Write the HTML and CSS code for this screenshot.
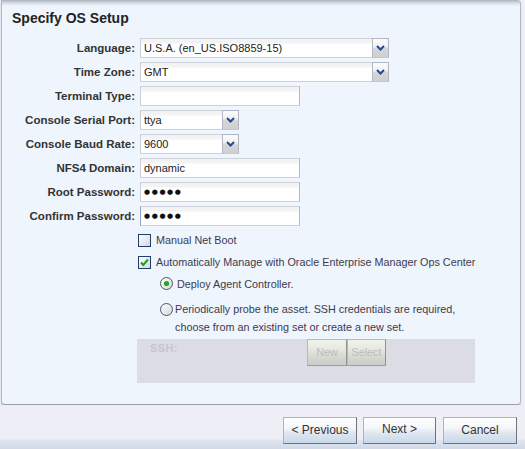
FILE: index.html
```html
<!DOCTYPE html>
<html>
<head>
<meta charset="utf-8">
<link rel="stylesheet" href="styles.css">
</head>
<body>
<div class="page">
  <div class="panel">
    <div class="title">Specify OS Setup</div>
    <div class="form">
      <label class="lbl">Language:</label>
      <div class="field sel w-long"><span class="val">U.S.A. (en_US.ISO8859-15)</span><span class="dd"><svg width="9" height="6" viewBox="0 0 9 6"><polyline points="1,1 4.5,4.5 8,1" fill="none" stroke="#27498a" stroke-width="2"/></svg></span></div>
      <label class="lbl">Time Zone:</label>
      <div class="field sel w-long"><span class="val">GMT</span><span class="dd"><svg width="9" height="6" viewBox="0 0 9 6"><polyline points="1,1 4.5,4.5 8,1" fill="none" stroke="#27498a" stroke-width="2"/></svg></span></div>
      <label class="lbl">Terminal Type:</label>
      <div class="field w-mid"><span class="val"></span></div>
      <label class="lbl">Console Serial Port:</label>
      <div class="field sel w-short"><span class="val">ttya</span><span class="dd"><svg width="9" height="6" viewBox="0 0 9 6"><polyline points="1,1 4.5,4.5 8,1" fill="none" stroke="#27498a" stroke-width="2"/></svg></span></div>
      <label class="lbl">Console Baud Rate:</label>
      <div class="field sel w-short"><span class="val">9600</span><span class="dd"><svg width="9" height="6" viewBox="0 0 9 6"><polyline points="1,1 4.5,4.5 8,1" fill="none" stroke="#27498a" stroke-width="2"/></svg></span></div>
      <label class="lbl">NFS4 Domain:</label>
      <div class="field w-mid"><span class="val">dynamic</span></div>
      <label class="lbl">Root Password:</label>
      <div class="field w-mid"><span class="val dots">●●●●●</span></div>
      <label class="lbl">Confirm Password:</label>
      <div class="field w-mid focus"><span class="val dots">●●●●●</span></div>
    </div>
    <div class="opts">
      <div class="chk-row">
        <svg class="cb" width="13" height="13" viewBox="0 0 13 13"><defs><linearGradient id="g1" x1="0" y1="0" x2="1" y2="1"><stop offset="0" stop-color="#ffffff"/><stop offset="1" stop-color="#d4d6da"/></linearGradient></defs><rect x="0.5" y="0.5" width="12" height="12" fill="url(#g1)" stroke="#1d3d6c"/></svg>
        <span>Manual Net Boot</span>
      </div>
      <div class="chk-row">
        <svg class="cb" width="13" height="13" viewBox="0 0 13 13"><rect x="0.5" y="0.5" width="12" height="12" fill="url(#g1)" stroke="#1d3d6c"/><polyline points="3,6.5 5.3,9 10,3.5" fill="none" stroke="#1f9e22" stroke-width="2"/></svg>
        <span>Automatically Manage with Oracle Enterprise Manager Ops Center</span>
      </div>
      <div class="radio-row r1">
        <svg class="rb" width="13" height="13" viewBox="0 0 13 13"><circle cx="6.5" cy="6.5" r="6" fill="url(#g1)" stroke="#4b5868"/><circle cx="6.5" cy="6.5" r="2.6" fill="#24a52a"/></svg>
        <span>Deploy Agent Controller.</span>
      </div>
      <div class="radio-row r2">
        <svg class="rb" width="13" height="13" viewBox="0 0 13 13"><circle cx="6.5" cy="6.5" r="6" fill="url(#g1)" stroke="#4b5868"/></svg>
        <span>Periodically probe the asset. SSH credentials are required,<br>choose from an existing set or create a new set.</span>
      </div>
      <div class="ssh">
        <span class="ssh-lbl">SSH:</span>
        <span class="sbtn new">New</span><span class="sbtn sel2">Select</span>
      </div>
    </div>
  </div>
  <div class="footer">
    <span class="btn b-prev">&lt; Previous</span>
    <span class="btn b-next">Next &gt;</span>
    <span class="btn b-cancel">Cancel</span>
  </div>
</div>
</body>
</html>
```
FILE: styles.css
```css
html, body {
  margin: 0;
  padding: 0;
}
body {
  background: #eeeef6;
  font-family: "Liberation Sans", Arial, sans-serif;
  font-size: 11px;
  color: #333;
}
.page {
  width: 525px;
  height: 449px;
  overflow: hidden;
}
.panel {
  box-sizing: border-box;
  height: 405px;
  margin: 0 4px 0 1px;
  border: 1px solid #b2b6c2;
  border-top: none;
  border-bottom-color: #9c9ca6;
  border-radius: 0 4px 4px 4px;
  background: linear-gradient(#a9b1bd 0, #d6dde6 3px, #eef5fd 6px);
  box-shadow: 0 2px 1px rgba(120, 120, 130, 0.35);
}
.title {
  height: 38px;
  line-height: 36px;
  padding-left: 10px;
  font-size: 14px;
  font-weight: bold;
  color: #222;
}
.form {
  display: grid;
  grid-template-columns: 133px auto;
  column-gap: 5px;
  row-gap: 4px;
  grid-auto-rows: 20px;
  justify-items: start;
}
.lbl {
  justify-self: end;
  line-height: 20px;
  font-size: 11.5px;
  font-weight: bold;
  color: #333;
}
.field {
  box-sizing: border-box;
  height: 20px;
  display: flex;
  border: 1px solid #cdd0d8;
  border-right-color: #b3b9c9;
  background: linear-gradient(#f3f3f3 0, #f3f3f3 4px, #ffffff 5px);
}
.field.focus {
  border-left-color: #8fa4c8;
}
.w-long { width: 249px; }
.w-mid { width: 160px; }
.w-short { width: 99px; }
.val {
  flex: 1;
  padding-left: 3px;
  line-height: 18px;
  color: #222;
  white-space: nowrap;
  overflow: hidden;
}
.dots {
  font-family: "DejaVu Sans", sans-serif;
  font-size: 7px;
  letter-spacing: 1.6px;
  color: #111;
  line-height: 18px;
}
.dd {
  box-sizing: border-box;
  width: 17px;
  margin: -1px -1px -1px 0;
  height: 20px;
  border: 1px solid #b2b7c6;
  border-bottom-color: #c4c8d2;
  background: linear-gradient(#fbfbfb 0, #f2f2f2 40%, #d4d4d6 55%, #d0d0d2 100%);
  display: flex;
  justify-content: center;
  padding-top: 6px;
}
.opts {
  margin-left: 136px;
  margin-top: 3px;
  color: #3d3a4e;
  font-size: 10.8px;
}
.chk-row {
  height: 22px;
  display: flex;
  align-items: center;
  gap: 5px;
}
.cb, .rb {
  flex: none;
}
.radio-row {
  display: flex;
  gap: 4px;
  margin-left: 22px;
}
.radio-row.r1 {
  height: 21px;
  align-items: center;
}
.radio-row.r2 {
  margin-top: 6px;
  line-height: 18px;
  align-items: flex-start;
}
.radio-row.r2 .rb {
  margin-top: 3px;
}
.radio-row.r2 span {
  margin-left: -2px;
}
.ssh {
  margin-top: 3px;
  width: 338px;
  height: 44px;
  box-sizing: border-box;
  margin-left: -1px;
  background: #dcdce4;
  display: flex;
  align-items: flex-start;
  padding-left: 13px;
}
.ssh-lbl {
  width: 157px;
  line-height: 18px;
  font-weight: bold;
  color: #c4c6cf;
  letter-spacing: 0.5px;
}
.sbtn {
  box-sizing: border-box;
  height: 27px;
  line-height: 25px;
  text-align: center;
  color: #b9bdc2;
  border: 1px solid #b5b9bd;
  border-right-color: #8e9296;
  border-bottom-color: #9a9ea2;
  background: linear-gradient(#f0f3ea 0, #e6eae0 35%, #d8dcd2 60%, #c9cdca 100%);
}
.sbtn.new { width: 40px; }
.sbtn.sel2 { width: 39px; }
.footer {
  height: 44px;
  box-sizing: border-box;
  padding-top: 12px;
  padding-right: 8px;
  display: flex;
  justify-content: flex-end;
  background: linear-gradient(#eeeef6 0, #eeeef6 34px, #dfe6ef 35px, #d2d9e7 44px);
}
.btn {
  box-sizing: border-box;
  height: 27px;
  line-height: 25px;
  text-align: center;
  font-size: 12px;
  color: #333;
  border: 1px solid #b2b2ba;
  border-right-color: #707078;
  border-bottom-color: #707078;
  background: linear-gradient(#ffffff 0, #f4f6f9 40%, #dfe7f0 60%, #c9d8ea 100%);
}
.b-prev { width: 74px; margin-right: 6px; }
.b-next { width: 73px; margin-right: 7px; line-height: 22px; }
.b-cancel { width: 74px; }
```
